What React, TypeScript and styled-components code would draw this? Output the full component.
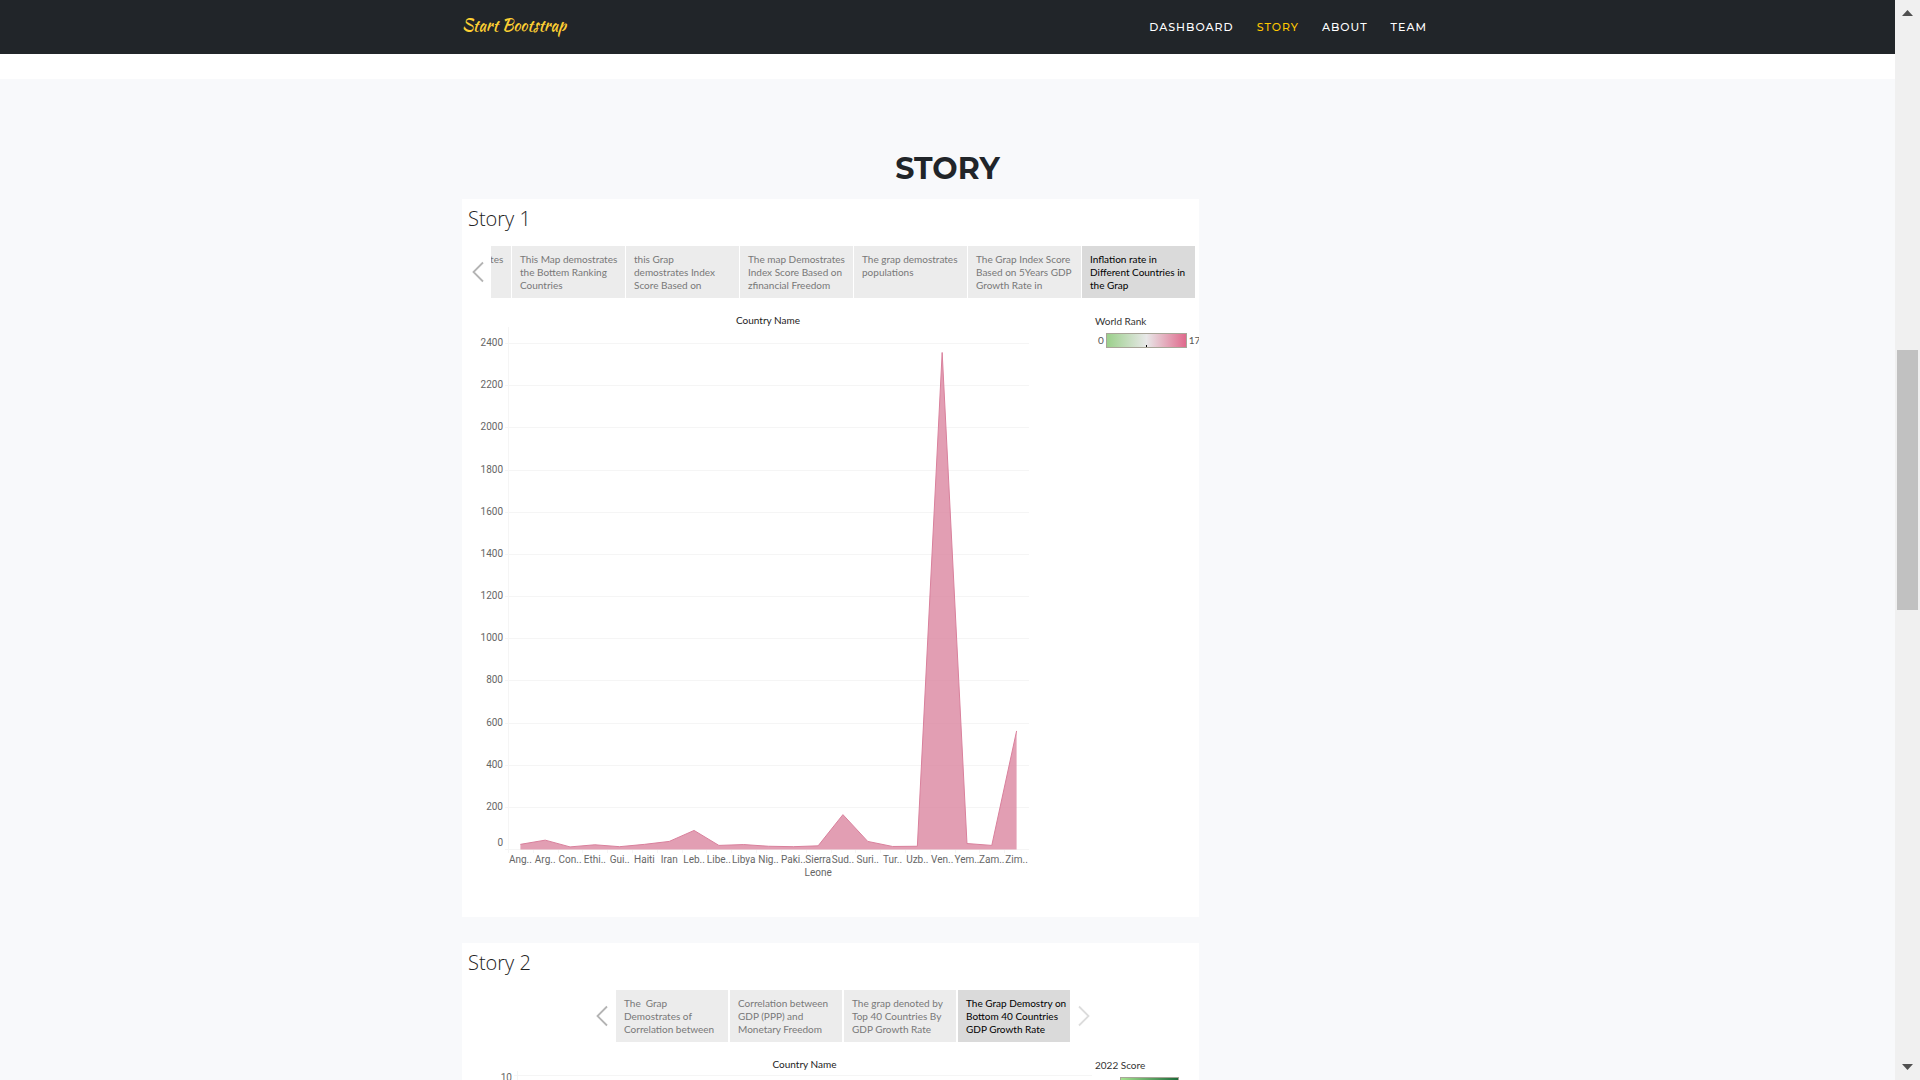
import React from "react";
import styled, { createGlobalStyle } from "styled-components";

const sans = `"Montserrat", Inter, "Open Sans", sans-serif`;
const viz = `Lato, "Open Sans", sans-serif`;
const vizAxis = `Roboto, "Open Sans", sans-serif`;
const vizTitle = `"Open Sans", "Noto Sans", sans-serif`;

const GlobalStyle = createGlobalStyle`
  *, *::before, *::after { box-sizing: border-box; }
  body { margin: 0; background: #fff; color: #212529; font-family: ${sans}; }
`;

const Shell = styled.div`
  display: flex;
  height: 100vh;
  overflow: hidden;
`;

const Page = styled.div`
  flex: 1;
  min-width: 0;
  height: 100%;
  overflow: hidden;
`;

const Container = styled.div`
  width: 100%;
  max-width: 971px;
  margin: 0 auto;
`;

const Navbar = styled.header`
  background: #212529;
  margin-bottom: 25px;
`;

const NavRow = styled(Container)`
  display: flex;
  align-items: center;
  justify-content: space-between;
  height: 54px;
  padding: 0 6px 2px 0;
`;

const Brand = styled.a`
  color: #fdcf33;
  font: 400 16px/24px "Kaushan Script", Lato, sans-serif;
  text-decoration: none;
`;

const NavList = styled.ul`
  display: flex;
  gap: 23px;
  margin: 0;
  padding: 0;
  list-style: none;
`;

const NavLink = styled.a<{ $active?: boolean }>`
  color: ${(p) => (p.$active ? "#ffc800" : "#fff")};
  font-size: 11px;
  line-height: 20px;
  font-weight: 500;
  letter-spacing: 1px;
  text-transform: uppercase;
  text-decoration: none;
`;

const Section = styled.section`
  min-height: 100%;
  padding: 72px 0;
  background: #f8f9fb;
`;

const Heading = styled.h2`
  margin: 0 0 12px;
  font-size: 30px;
  line-height: 36px;
  font-weight: 700;
  text-align: center;
  text-transform: uppercase;
`;

const Cards = styled.div`
  display: flex;
  flex-direction: column;
  gap: 26px;
`;

const Card = styled.article`
  max-width: 737px;
  overflow: hidden;
  background: #fff;
  font-family: ${viz};
`;

const CardTitle = styled.h3`
  margin: 0;
  padding: 0 6px 7px;
  font-family: ${vizTitle};
  font-size: 20px;
  line-height: 40px;
  font-weight: 300;
  color: #222;
`;

const Navigator = styled.div<{ $full?: boolean }>`
  display: flex;
  align-items: center;
  justify-content: center;
  padding: ${(p) => (p.$full ? "0 4px 0 9px" : "0 0 0 25px")};
`;

const Arrow = styled.button<{ $dim?: boolean }>`
  display: flex;
  flex: none;
  width: 20px;
  padding: 0;
  border: 0;
  background: none;
  color: ${(p) => (p.$dim ? "#dcdcdc" : "#b4b4b4")};
`;

const Points = styled.div<{ $full?: boolean }>`
  display: flex;
  flex: ${(p) => (p.$full ? "1" : "none")};
  justify-content: flex-end;
  gap: ${(p) => (p.$full ? 1 : 2)}px;
  min-width: 0;
  margin: ${(p) => (p.$full ? "0" : "0 1px")};
  overflow: hidden;
`;

const Point = styled.button<{ $active?: boolean; $width: number }>`
  display: flex;
  flex: none;
  align-items: flex-start;
  width: ${(p) => p.$width}px;
  height: 52px;
  padding: 7px 0 0 8px;
  border: 0;
  background: ${(p) => (p.$active ? "#dadada" : "#ececec")};
  color: ${(p) => (p.$active ? "#000" : "#787878")};
  font: 400 10px/13px ${viz};
  text-align: left;
  white-space: pre;
`;

const Body = styled.div`
  display: flex;
`;

const Figure = styled.figure`
  flex: none;
  width: 630px;
  margin: 0;
  padding-top: 16px;
`;

const Caption = styled.figcaption<{ $from: number; $to: number }>`
  width: ${(p) => p.$to}px;
  padding-left: ${(p) => p.$from}px;
  color: #222;
  font-size: 10px;
  line-height: 13px;
  text-align: center;
`;

const Plot = styled.svg`
  display: block;
  font-family: ${vizAxis};
  font-size: 10px;
  fill: #666;
`;

const Legend = styled.aside`
  flex: 1;
  min-width: 0;
  padding: 17px 0 0 3px;
  color: #333;
  font-size: 10px;
  line-height: 13px;
`;

const Scale = styled.div<{ $indent: number }>`
  display: flex;
  align-items: center;
  gap: 2px;
  margin-top: 5px;
  padding-left: ${(p) => p.$indent}px;
  color: #555;
`;

const Ramp = styled.div<{ $colors: string; $width: number }>`
  display: flex;
  flex: none;
  align-items: flex-end;
  justify-content: center;
  width: ${(p) => p.$width}px;
  height: 15px;
  border: 1px solid #a8a598;
  background: linear-gradient(to right, ${(p) => p.$colors});
`;

const Marker = styled.span`
  width: 1px;
  height: 2px;
  background: #000;
`;

const ScrollTrack = styled.div`
  display: flex;
  flex: none;
  flex-direction: column;
  align-items: center;
  justify-content: space-between;
  width: 25px;
  padding: 10px 0;
  background: #f0f0f0;
`;

const ScrollSpace = styled.div`
  display: grid;
  flex: 1;
  grid-template-rows: 334fr 260fr 454fr;
`;

const Thumb = styled.div`
  grid-row: 2;
  width: 21px;
  background: #c1c1c1;
`;

type StoryPoint = { text: string; active?: boolean };

const storyOne: StoryPoint[] = [
  { text: "This Map demostrates" },
  { text: "This Map demostrates\nthe Bottem Ranking\nCountries" },
  { text: "this Grap\ndemostrates Index\nScore Based on" },
  { text: "The map Demostrates\nIndex Score Based on\nzfinancial Freedom" },
  { text: "The grap demostrates\npopulations" },
  { text: "The Grap Index Score\nBased on 5Years GDP\nGrowth Rate in" },
  { text: "Inflation rate in\nDifferent Countries in\nthe Grap", active: true },
];

const storyTwo: StoryPoint[] = [
  { text: "The  Grap\nDemostrates of\nCorrelation between" },
  { text: "Correlation between\nGDP (PPP) and\nMonetary Freedom" },
  { text: "The grap denoted by\nTop 40 Countries By\nGDP Growth Rate" },
  { text: "The Grap Demostry on\nBottom 40 Countries\nGDP Growth Rate", active: true },
];

const inflation: [string, number][] = [
  ["Ang..", 22], ["Arg..", 42], ["Con..", 10], ["Ethi..", 20], ["Gui..", 11],
  ["Haiti", 22], ["Iran", 36], ["Leb..", 88], ["Libe..", 17], ["Libya", 21],
  ["Nig..", 13], ["Paki..", 11], ["Sierra Leone", 15], ["Sud..", 163],
  ["Suri..", 36], ["Tur..", 12], ["Uzb..", 13], ["Ven..", 2355],
  ["Yem..", 26], ["Zam..", 17], ["Zim..", 560],
];

const LEFT = 46;
const RIGHT = 567;
const BASE = 522;
const TOP = 16;
const STEP = (RIGHT - LEFT) / inflation.length;
const xAt = (i: number) => LEFT + STEP * (i + 0.5);
const yAt = (v: number) => BASE - (v / 2400) * (BASE - TOP);

function InflationChart() {
  const line = inflation.map(([, v], i) => `${xAt(i)},${yAt(v)}`).join(" ");
  const ticks = Array.from({ length: 13 }, (_, i) => i * 200);
  return (
    <Plot width={RIGHT} height={590} role="img" aria-label="Inflation rate by country">
      {ticks.map((t) => (
        <g key={t}>
          <rect x={LEFT - 3} y={Math.round(yAt(t))} width={RIGHT - LEFT + 3} height={1} fill="#f5f5f5" />
          <text x={41} y={t === 0 ? BASE - 3 : Math.round(yAt(t)) + 3} textAnchor="end">{t}</text>
        </g>
      ))}
      <rect x={LEFT} y={0} width={1} height={BASE} fill="#f5f5f5" />
      {inflation.map(([name], i) => (
        <rect key={name} x={Math.round(LEFT + STEP * i)} y={BASE} width={1} height={4} fill="#f5f5f5" />
      ))}
      <polygon points={`${xAt(0)},${BASE + 0.5} ${line} ${xAt(20)},${BASE + 0.5}`} fill="#d87c98" fillOpacity={0.74} />
      <polyline points={line} fill="none" stroke="#d9809c" strokeWidth={1} />
      {inflation.map(([name], i) => (
        <text key={name} textAnchor="middle" y={536}>
          {name.split(" ").map((word, n) => (
            <tspan key={word} x={xAt(i)} dy={n * 13}>{word}</tspan>
          ))}
        </text>
      ))}
    </Plot>
  );
}

function ScoreChart() {
  return (
    <Plot width={630} height={590} role="img" aria-label="Score by country">
      <rect x={52} y={4} width={578} height={1} fill="#f5f5f5" />
      <rect x={55} y={0} width={1} height={522} fill="#f5f5f5" />
      <text x={50} y={10} textAnchor="end">10</text>
    </Plot>
  );
}

function Chevron({ right }: { right?: boolean }) {
  return (
    <svg width="20" height="22" viewBox="0 0 20 22" fill="none" stroke="currentColor" strokeWidth="1.8">
      <path d={right ? "M8 1.5 L17.5 11 L8 20.5" : "M12 1.5 L2.5 11 L12 20.5"} />
    </svg>
  );
}

function StoryNavigator({ points, full }: { points: StoryPoint[]; full?: boolean }) {
  return (
    <Navigator $full={full}>
      <Arrow aria-label="Previous"><Chevron /></Arrow>
      <Points $full={full}>
        {points.map((p, i) => (
          <Point key={i} $active={p.active} $width={full ? 113 : 112}>{p.text}</Point>
        ))}
      </Points>
      {!full && <Arrow $dim aria-label="Next"><Chevron right /></Arrow>}
    </Navigator>
  );
}

export default function App() {
  return (
    <>
      <GlobalStyle />
      <Shell>
        <Page>
          <Navbar>
            <NavRow>
              <Brand href="#top">Start Bootstrap</Brand>
              <nav>
                <NavList>
                  <li><NavLink href="#dashboard">Dashboard</NavLink></li>
                  <li><NavLink href="#story" $active>Story</NavLink></li>
                  <li><NavLink href="#about">About</NavLink></li>
                  <li><NavLink href="#team">Team</NavLink></li>
                </NavList>
              </nav>
            </NavRow>
          </Navbar>
          <Section id="story">
            <Container>
              <Heading>Story</Heading>
              <Cards>
                <Card>
                  <CardTitle>Story 1</CardTitle>
                  <StoryNavigator points={storyOne} full />
                  <Body>
                    <Figure>
                      <Caption $from={46} $to={566}>Country Name</Caption>
                      <InflationChart />
                    </Figure>
                    <Legend>
                      World Rank
                      <Scale $indent={3}>
                        <span>0</span>
                        <Ramp $width={81} $colors="#9bd08b, #e8e8e8, #e0698c"><Marker /></Ramp>
                        <span>17</span>
                      </Scale>
                    </Legend>
                  </Body>
                </Card>
                <Card>
                  <CardTitle>Story 2</CardTitle>
                  <StoryNavigator points={storyTwo} />
                  <Body>
                    <Figure>
                      <Caption $from={55} $to={630}>Country Name</Caption>
                      <ScoreChart />
                    </Figure>
                    <Legend>
                      2022 Score
                      <Scale $indent={25}>
                        <Ramp $width={59} $colors="#a5e28f, #1c6b3a" />
                      </Scale>
                    </Legend>
                  </Body>
                </Card>
              </Cards>
            </Container>
          </Section>
        </Page>
        <ScrollTrack aria-hidden="true">
          <svg width="11" height="6" viewBox="0 0 11 6"><path d="M0 6 L5.5 0 L11 6 Z" fill="#505050" /></svg>
          <ScrollSpace>
            <Thumb />
          </ScrollSpace>
          <svg width="11" height="6" viewBox="0 0 11 6"><path d="M0 0 L5.5 6 L11 0 Z" fill="#505050" /></svg>
        </ScrollTrack>
      </Shell>
    </>
  );
}
